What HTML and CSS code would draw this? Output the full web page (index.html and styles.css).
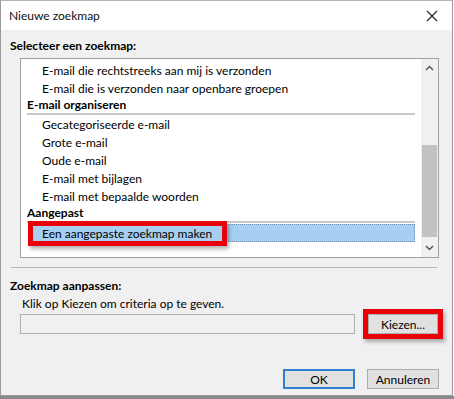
FILE: index.html
```html
<!DOCTYPE html>
<html lang="nl">
<head>
    <meta charset="UTF-8">
    <title>Nieuwe zoekmap</title>
    <link rel="stylesheet" href="styles.css">
</head>
<body>
    <div class="window">
        <div class="titlebar">
            <span class="title">Nieuwe zoekmap</span>
            <svg class="close" width="12" height="12" viewBox="0 0 12 12">
                <path d="M1 1 L11 11 M11 1 L1 11" stroke="#222" stroke-width="1.1" fill="none"/>
            </svg>
        </div>
        <div class="content">
            <div class="label">Selecteer een zoekmap:</div>
            <div class="listbox">
                <div class="list">
                    <div class="item">E-mail die rechtstreeks aan mij is verzonden</div>
                    <div class="item">E-mail die is verzonden naar openbare groepen</div>
                    <div class="group">E-mail organiseren</div>
                    <div class="item">Gecategoriseerde e-mail</div>
                    <div class="item">Grote e-mail</div>
                    <div class="item">Oude e-mail</div>
                    <div class="item">E-mail met bijlagen</div>
                    <div class="item">E-mail met bepaalde woorden</div>
                    <div class="group">Aangepast</div>
                    <div class="item selected"><span class="mark">Een aangepaste zoekmap maken</span></div>
                </div>
                <div class="scrollbar">
                    <svg class="arrow" width="9" height="6" viewBox="0 0 9 6"><path d="M1 5 L4.5 1.5 L8 5" stroke="#555" stroke-width="1.5" fill="none"/></svg>
                    <div class="track"><div class="thumb"></div></div>
                    <svg class="arrow" width="9" height="6" viewBox="0 0 9 6"><path d="M1 1 L4.5 4.5 L8 1" stroke="#555" stroke-width="1.5" fill="none"/></svg>
                </div>
            </div>
            <div class="divider"></div>
            <div class="label">Zoekmap aanpassen:</div>
            <p class="hint">Klik op Kiezen om criteria op te geven.</p>
            <div class="criteria">
                <div class="field"></div>
                <div class="mark-btn"><button class="btn">Kiezen...</button></div>
            </div>
            <div class="footer">
                <button class="btn default">OK</button>
                <button class="btn">Annuleren</button>
            </div>
        </div>
    </div>
    <div class="below"></div>
</body>
</html>
```

FILE: styles.css
```css
body {
    margin: 0;
    padding: 0;
    width: 454px;
    height: 399px;
    overflow: hidden;
    background: #fff;
    font-family: Lato, "Noto Sans", sans-serif;
    font-size: 12px;
    color: #000;
}

.window {
    width: 451px;
    height: 394px;
    border: 1px solid #9a9a9a;
    border-top-color: #b5b5b5;
    display: flex;
    flex-direction: column;
    background: #f0f0f0;
}

.titlebar {
    height: 29px;
    background: #fff;
    display: flex;
    align-items: center;
    justify-content: space-between;
    padding: 0 14px 0 8px;
}

.title {
    color: #111;
}

.content {
    flex: 1;
    padding: 7px 13px 0 9px;
    display: flex;
    flex-direction: column;
}

.label {
    font-weight: bold;
    height: 18px;
    line-height: 18px;
}

.listbox {
    margin: 3px 0 0 10px;
    height: 198px;
    background: #fff;
    border: 1px solid #a0a0a0;
    display: flex;
}

.list {
    flex: 1;
    padding: 3px 6px 0 6px;
}

.item, .group {
    height: 18px;
    line-height: 18px;
    white-space: nowrap;
}

.item {
    padding-left: 15px;
}

.group {
    font-weight: bold;
    border-bottom: 2px solid #c8c8c8;
    height: 15px;
    line-height: 14px;
    margin-bottom: 1px;
}

.item.selected {
    margin: 1px 0 0 3px;
    padding-left: 2px;
    background: #a6cff1;
    border: 1px dotted #6b8fb0;
    height: 16px;
    line-height: 16px;
}

.mark {
    display: inline-block;
    vertical-align: top;
    height: 15px;
    line-height: 15px;
    margin-top: 1px;
    padding: 0 10px 0 9px;
    box-shadow: 0 0 0 5px #e8000b, 2px 3px 4px 5px rgba(0, 0, 0, 0.3);
}

.scrollbar {
    width: 17px;
    display: flex;
    flex-direction: column;
    align-items: center;
    background: #f0f0f0;
}

.arrow {
    margin: 6px 0;
}

.track {
    flex: 1;
    width: 100%;
    display: flex;
    flex-direction: column;
    justify-content: flex-end;
}

.thumb {
    height: 92px;
    background: #c2c2c2;
    margin: 0 1px 2px 1px;
}

.divider {
    height: 1px;
    background: #b9b9b9;
    margin: 9px 2px 9px 1px;
}

.hint {
    margin: 0;
    padding-left: 12px;
    height: 18px;
    line-height: 18px;
}

.criteria {
    margin: 1px 0 0 10px;
    display: flex;
    align-items: center;
}

.field {
    width: 333px;
    height: 18px;
    border: 1px solid #b0b0b0;
    background: #f0f0f0;
}

.mark-btn {
    margin-left: 13px;
    box-shadow: 0 0 0 5px #e8000b, 2px 3px 4px 5px rgba(0, 0, 0, 0.3);
    display: flex;
}

.btn {
    font-family: Lato, "Noto Sans", sans-serif;
    font-size: 12px;
    height: 20px;
    width: 70px;
    padding: 0;
    background: #e1e1e1;
    border: 1px solid #adadad;
    color: #000;
}

.footer {
    margin-top: 35px;
    display: flex;
    justify-content: flex-end;
    gap: 12px;
}

.footer .btn {
    width: 72px;
}

.btn.default {
    border: 2px solid #2f7fd2;
}

.below {
    height: 4px;
    background: #8a8a8a;
}
```
